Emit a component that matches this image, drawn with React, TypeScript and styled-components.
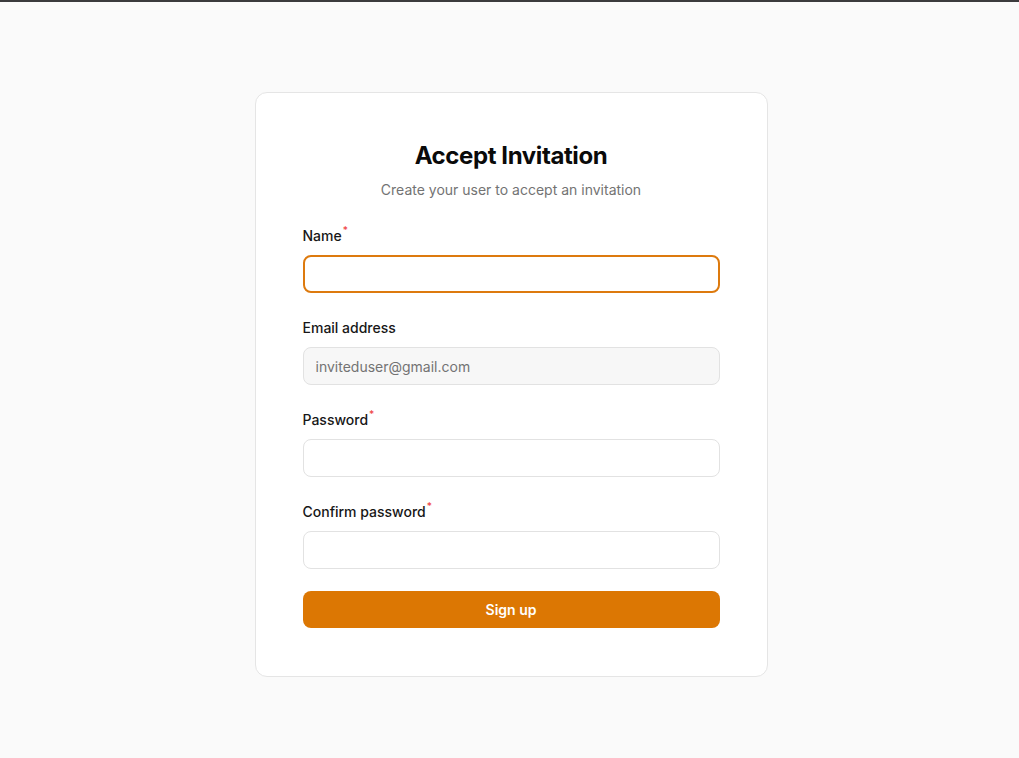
import React from "react";
import styled, { createGlobalStyle } from "styled-components";

const Global = createGlobalStyle`
  html, body { margin: 0; padding: 0; background: #fafafa; }
  body { font-family: Inter, "Noto Sans", sans-serif; color: #0a0a0a; }
  * { box-sizing: border-box; }
`;

const TopBar = styled.div`
  height: 2px;
  background: #3b3b3d;
`;

const Page = styled.main`
  display: flex;
  justify-content: center;
  padding: 90px 0 0 3px;
  min-height: 756px;
`;

const Card = styled.form`
  width: 513px;
  height: 585px;
  background: #ffffff;
  border: 1px solid #e5e5e5;
  border-radius: 12px;
  padding: 47px 47px 47px;
  display: flex;
  flex-direction: column;
`;

const Title = styled.h1`
  margin: 0;
  font-size: 24px;
  line-height: 32px;
  font-weight: 700;
  text-align: center;
  letter-spacing: -0.4px;
  color: #0a0a0a;
`;

const Subtitle = styled.p`
  margin: 8px 0 26px;
  font-size: 14px;
  line-height: 20px;
  text-align: center;
  color: #737373;
`;

const Field = styled.div`
  display: flex;
  flex-direction: column;
  margin-bottom: 25px;
`;

const Label = styled.label`
  font-size: 14px;
  line-height: 20px;
  font-weight: 500;
  color: #171717;
  margin-bottom: 9px;
`;

const Req = styled.sup`
  color: #ef4444;
  font-size: 10px;
  line-height: 0;
  margin-left: 1px;
  position: relative;
  top: -1px;
`;

const Input = styled.input<{ $focused?: boolean }>`
  height: 38px;
  width: 100%;
  border-radius: 8px;
  border: ${(p) => (p.$focused ? "2px solid #dd7a0e" : "1px solid #e2e2e2")};
  background: ${(p) => (p.disabled ? "#f7f7f7" : "#ffffff")};
  padding: 0 ${(p) => (p.$focused ? "11px" : "12px")};
  font-family: Inter, "Noto Sans", sans-serif;
  font-size: 14px;
  color: #737373;
  outline: none;
  &::placeholder { color: #737373; }
`;

const Button = styled.button`
  margin-top: -3px;
  height: 37px;
  width: 100%;
  border: none;
  border-radius: 8px;
  background: #dc7703;
  color: #ffffff;
  font-family: Inter, "Noto Sans", sans-serif;
  font-size: 14px;
  font-weight: 600;
  cursor: pointer;
`;

export default function App() {
  return (
    <>
      <Global />
      <TopBar />
      <Page>
        <Card onSubmit={(e) => e.preventDefault()}>
          <Title>Accept Invitation</Title>
          <Subtitle>Create your user to accept an invitation</Subtitle>
          <Field>
            <Label>
              Name<Req>*</Req>
            </Label>
            <Input $focused />
          </Field>
          <Field>
            <Label>Email address</Label>
            <Input disabled value="inviteduser@gmail.com" readOnly />
          </Field>
          <Field>
            <Label>
              Password<Req>*</Req>
            </Label>
            <Input type="password" />
          </Field>
          <Field>
            <Label>
              Confirm password<Req>*</Req>
            </Label>
            <Input type="password" />
          </Field>
          <Button type="submit">Sign up</Button>
        </Card>
      </Page>
    </>
  );
}
